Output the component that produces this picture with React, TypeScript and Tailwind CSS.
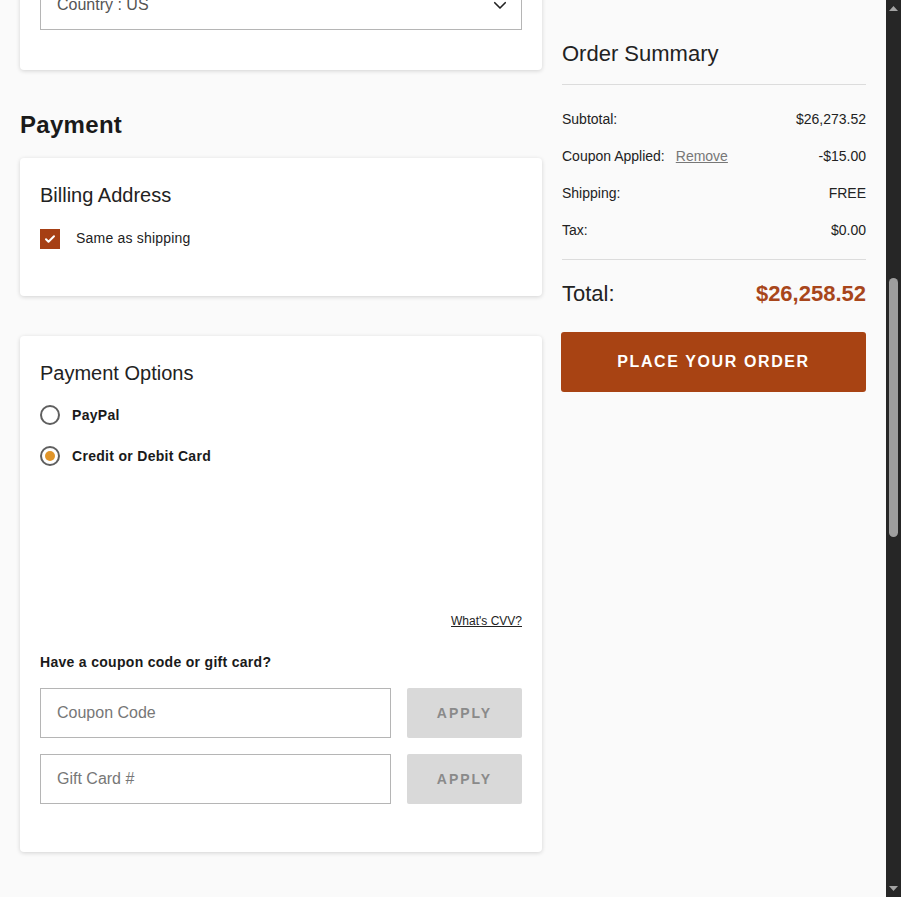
import React from "react";

const font = { fontFamily: '"Liberation Sans", Arial, sans-serif' };

function Card({ children, className = "" }: { children: React.ReactNode; className?: string }) {
  return (
    <div className={`bg-white rounded-[4px] shadow-[0_1px_4px_rgba(0,0,0,0.16)] ${className}`}>{children}</div>
  );
}

function Row({ label, value, extra, h = "h-[37px]" }: { label: string; value: string; extra?: React.ReactNode; h?: string }) {
  return (
    <div className={`flex items-center justify-between ${h} text-[14px] text-[#222]`}>
      <div className="flex items-center">
        <span>{label}</span>
        {extra}
      </div>
      <span>{value}</span>
    </div>
  );
}

export default function App() {
  return (
    <div className="h-[897px] w-[901px] overflow-hidden flex bg-[#fafafa]" style={font}>
      <div className="flex-1 flex gap-5 px-5">
        {/* Left column */}
        <div className="w-[522px] flex flex-col">
          <Card className="-mt-[39px] pt-[19px] px-5 pb-10">
            <div className="h-[50px] border border-[#b5b5b5] flex items-center justify-between pl-4 pr-3">
              <span className="text-[16px] text-[#555]">Country : US</span>
              <svg width="18" height="18" viewBox="0 0 24 24" fill="none" stroke="#222" strokeWidth="2.2" strokeLinecap="round" strokeLinejoin="round">
                <path d="M5 9l7 7 7-7" />
              </svg>
            </div>
          </Card>

          <h2 className="mt-[41px] text-[24px] leading-[28px] font-bold text-[#1a1a1a] tracking-[0.3px]">Payment</h2>

          <Card className="mt-[19px] h-[138px] px-5 pt-[25px]">
            <div className="text-[20px] leading-[24px] text-[#222]">Billing Address</div>
            <div className="mt-[21px] flex items-center">
              <div className="w-5 h-5 bg-[#a63f14] flex items-center justify-center">
                <svg width="12" height="12" viewBox="0 0 24 24" fill="none" stroke="#fff" strokeWidth="4" strokeLinecap="round" strokeLinejoin="round">
                  <path d="M4 12.5l5 5L20 6.5" />
                </svg>
              </div>
              <span className="ml-4 text-[14px] text-[#222] tracking-[0.2px]">Same as shipping</span>
            </div>
          </Card>

          <Card className="mt-[40px] h-[516px] px-5 pt-[25px] flex flex-col">
            <div className="text-[20px] leading-[24px] text-[#222]">Payment Options</div>
            <div className="mt-[20px] flex items-center h-5">
              <div className="w-5 h-5 rounded-full border-2 border-[#5f5f5f] bg-white" />
              <span className="ml-3 text-[14px] font-bold text-[#1a1a1a] tracking-[0.3px]">PayPal</span>
            </div>
            <div className="mt-[21px] flex items-center h-5">
              <div className="w-5 h-5 rounded-full border-2 border-[#5f5f5f] bg-white flex items-center justify-center">
                <div className="w-[10px] h-[10px] rounded-full bg-[#e0952a]" />
              </div>
              <span className="ml-3 text-[14px] font-bold text-[#1a1a1a] tracking-[0.3px]">Credit or Debit Card</span>
            </div>
            <div className="mt-[148px] flex justify-end">
              <span className="text-[12px] leading-[14px] underline text-[#222]">What's CVV?</span>
            </div>
            <div className="mt-[26px] text-[14px] leading-[16px] font-bold text-[#1a1a1a] tracking-[0.3px]">Have a coupon code or gift card?</div>
            <div className="mt-[18px] flex gap-4">
              <div className="flex-1 h-[50px] border border-[#b5b5b5] flex items-center pl-4 text-[16px] text-[#777]">Coupon Code</div>
              <div className="w-[115px] h-[50px] bg-[#d9d9d9] rounded-[2px] flex items-center justify-center text-[14px] font-bold text-[#8a8a8a] tracking-[2px]">APPLY</div>
            </div>
            <div className="mt-[16px] flex gap-4">
              <div className="flex-1 h-[50px] border border-[#b5b5b5] flex items-center pl-4 text-[16px] text-[#777]">Gift Card #</div>
              <div className="w-[115px] h-[50px] bg-[#d9d9d9] rounded-[2px] flex items-center justify-center text-[14px] font-bold text-[#8a8a8a] tracking-[2px]">APPLY</div>
            </div>
          </Card>
        </div>

        {/* Right column */}
        <div className="w-[304px] flex flex-col pt-[41px]">
          <div className="text-[22px] leading-[26px] text-[#222]">Order Summary</div>
          <div className="mt-[17px] border-t border-[#dcdcdc]" />
          <div className="mt-[16px]">
            <Row label="Subtotal:" value="$26,273.52" />
            <Row
              label="Coupon Applied:"
              value="-$15.00"
              extra={<span className="ml-[11px] underline text-[#777]">Remove</span>}
            />
            <Row label="Shipping:" value="FREE" />
            <Row label="Tax:" value="$0.00" h="h-[36px]" />
          </div>
          <div className="mt-[11px] border-t border-[#dcdcdc]" />
          <div className="mt-[19px] flex items-center justify-between h-[28px]">
            <span className="text-[22px] text-[#222]">Total:</span>
            <span className="text-[22px] font-bold text-[#a8461b]">$26,258.52</span>
          </div>
          <div className="mt-[25px] -ml-px h-[60px] rounded-[3px] bg-[#a84313] flex items-center justify-center text-white font-bold text-[16px] tracking-[1.6px]">
            PLACE YOUR ORDER
          </div>
        </div>
      </div>

      {/* Scrollbar */}
      <div className="w-[15px] h-full bg-[#262626] flex flex-col items-center">
        <div className="h-[17px] flex items-center justify-center">
          <svg width="9" height="5" viewBox="0 0 9 5"><path d="M0 5L4.5 0L9 5z" fill="#a3a3a3" /></svg>
        </div>
        <div className="mt-[261px] w-[9px] h-[259px] rounded-[5px] bg-[#9e9e9e]" />
        <div className="flex-1" />
        <div className="h-[17px] flex items-center justify-center">
          <svg width="9" height="5" viewBox="0 0 9 5"><path d="M0 0L4.5 5L9 0z" fill="#a3a3a3" /></svg>
        </div>
      </div>
    </div>
  );
}
